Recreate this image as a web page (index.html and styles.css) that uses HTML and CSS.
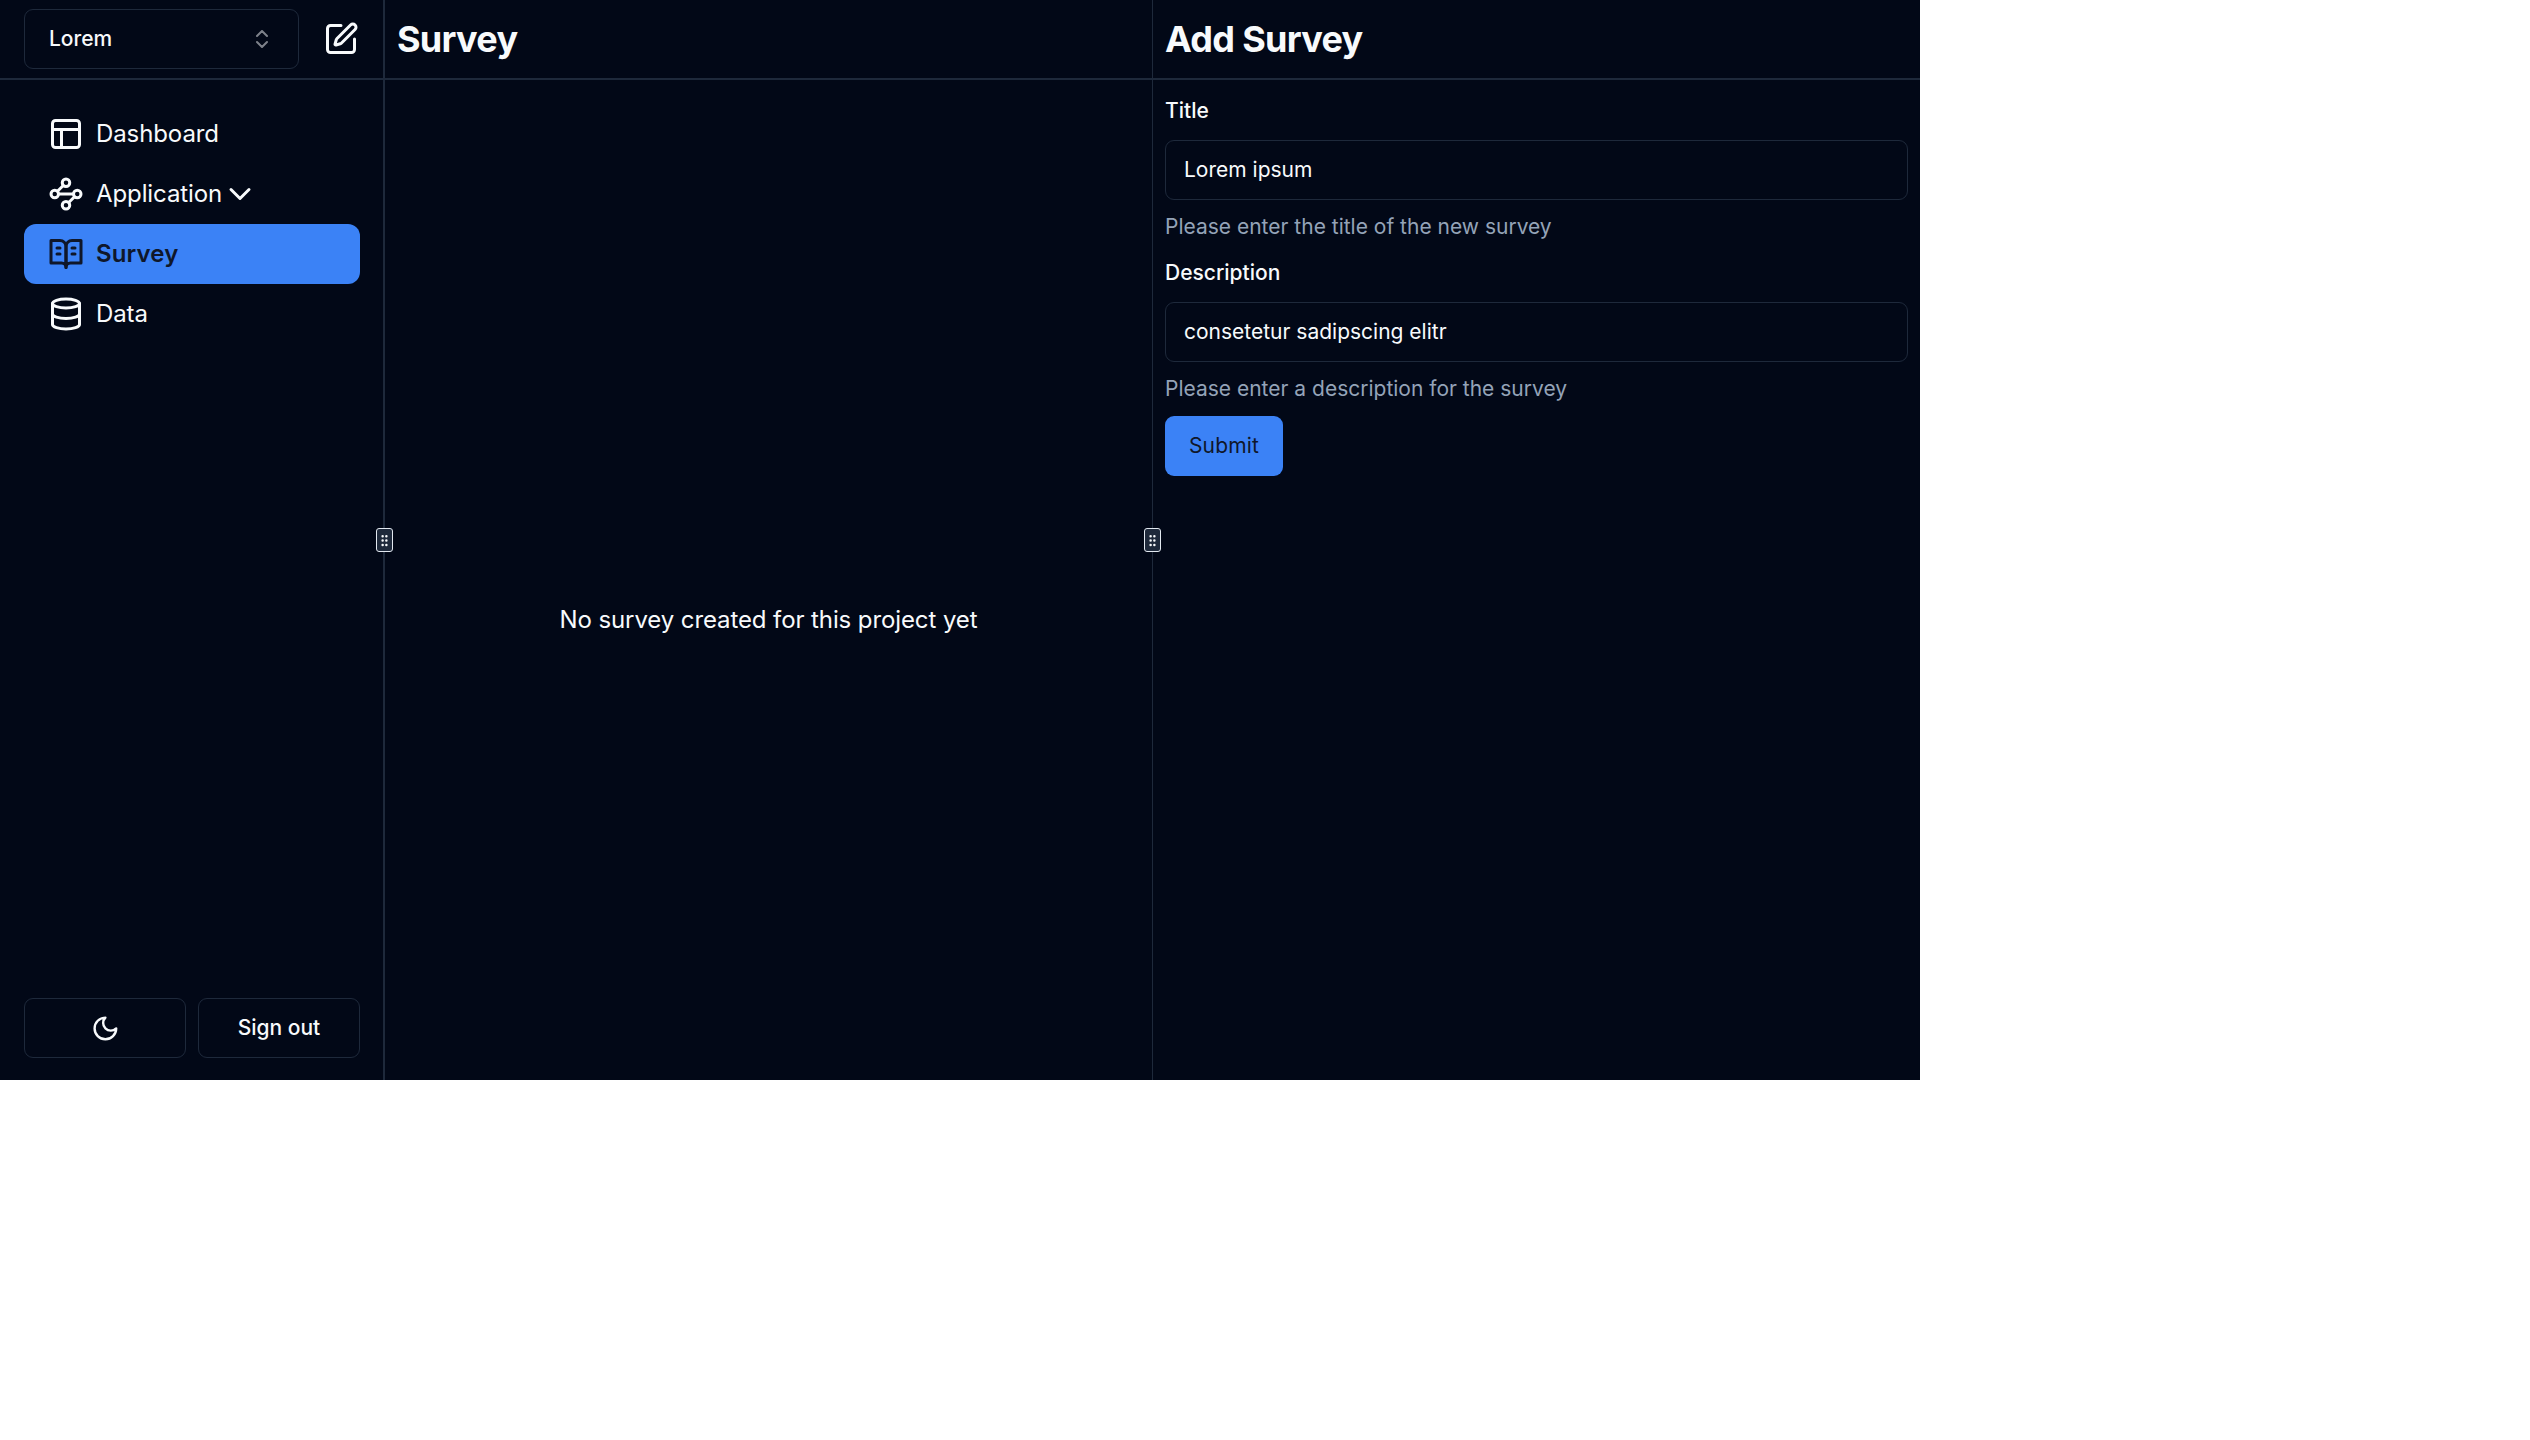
FILE: index.html
```html
<!DOCTYPE html>
<html lang="en">
<head>
<meta charset="utf-8">
<title>Survey</title>
<link rel="stylesheet" href="styles.css">
</head>
<body>
<div class="app">
  <aside class="sidebar">
    <div class="panel-header switcher">
      <button class="select" type="button">
        <span>Lorem</span>
        <svg class="icon select-icon" viewBox="0 0 24 24"><path d="m7 15 5 5 5-5"/><path d="m7 9 5-5 5 5"/></svg>
      </button>
      <svg class="icon icon-lg edit-icon" viewBox="0 0 24 24"><path d="M12 3H5a2 2 0 0 0-2 2v14a2 2 0 0 0 2 2h14a2 2 0 0 0 2-2v-7"/><path d="M18.375 2.625a1 1 0 0 1 3 3l-9.013 9.014a2 2 0 0 1-.853.505l-2.873.84a.5.5 0 0 1-.62-.62l.84-2.873a2 2 0 0 1 .506-.852z"/></svg>
    </div>
    <nav class="nav">
      <a class="nav-item">
        <svg class="icon icon-lg" viewBox="0 0 24 24"><rect x="3" y="3" width="18" height="18" rx="2"/><path d="M3 9h18"/><path d="M9 21V9"/></svg>
        <span class="nav-label">Dashboard</span>
      </a>
      <a class="nav-item">
        <svg class="icon icon-lg" viewBox="0 0 24 24"><circle cx="12" cy="4.5" r="2.5"/><path d="m10.2 6.3-3.9 3.9"/><circle cx="4.5" cy="12" r="2.5"/><path d="M7 12h10"/><circle cx="19.5" cy="12" r="2.5"/><path d="m13.8 17.7 3.9-3.9"/><circle cx="12" cy="19.5" r="2.5"/></svg>
        <span class="nav-label">Application</span>
        <svg class="icon icon-lg" viewBox="0 0 24 24"><path d="m6 9 6 6 6-6"/></svg>
      </a>
      <a class="nav-item nav-item-active">
        <svg class="icon icon-lg" viewBox="0 0 24 24"><path d="M2 3h6a4 4 0 0 1 4 4v14a3 3 0 0 0-3-3H2z"/><path d="M22 3h-6a4 4 0 0 0-4 4v14a3 3 0 0 1 3-3h7z"/><path d="M6 8h2"/><path d="M6 12h2"/><path d="M16 8h2"/><path d="M16 12h2"/></svg>
        <span class="nav-label">Survey</span>
      </a>
      <a class="nav-item">
        <svg class="icon icon-lg" viewBox="0 0 24 24"><ellipse cx="12" cy="5" rx="9" ry="3"/><path d="M3 5v14a9 3 0 0 0 18 0V5"/><path d="M3 12a9 3 0 0 0 18 0"/></svg>
        <span class="nav-label">Data</span>
      </a>
    </nav>
    <div class="sidebar-footer">
      <button class="button-outline" type="button" aria-label="Theme">
        <svg class="icon theme-icon" viewBox="0 0 24 24"><path d="M12 3a6 6 0 0 0 9 9 9 9 0 1 1-9-9Z"/></svg>
      </button>
      <button class="button-outline" type="button">Sign out</button>
    </div>
  </aside>
  <div class="divider divider-thick">
    <div class="handle">
      <svg class="icon handle-icon" viewBox="0 0 24 24"><circle cx="9" cy="5" r="1"/><circle cx="9" cy="12" r="1"/><circle cx="9" cy="19" r="1"/><circle cx="15" cy="5" r="1"/><circle cx="15" cy="12" r="1"/><circle cx="15" cy="19" r="1"/></svg>
    </div>
  </div>
  <main class="panel survey-panel">
    <header class="panel-header"><h1 class="title">Survey</h1></header>
    <div class="empty">No survey created for this project yet</div>
  </main>
  <div class="divider">
    <div class="handle">
      <svg class="icon handle-icon" viewBox="0 0 24 24"><circle cx="9" cy="5" r="1"/><circle cx="9" cy="12" r="1"/><circle cx="9" cy="19" r="1"/><circle cx="15" cy="5" r="1"/><circle cx="15" cy="12" r="1"/><circle cx="15" cy="19" r="1"/></svg>
    </div>
  </div>
  <section class="panel add-panel">
    <header class="panel-header"><h1 class="title">Add Survey</h1></header>
    <form class="form">
      <div class="field">
        <label class="label" for="title">Title</label>
        <input class="input" id="title" type="text" value="Lorem ipsum">
        <p class="hint">Please enter the title of the new survey</p>
      </div>
      <div class="field">
        <label class="label" for="description">Description</label>
        <input class="input" id="description" type="text" value="consetetur sadipscing elitr">
        <p class="hint">Please enter a description for the survey</p>
      </div>
      <button class="submit" type="button">Submit</button>
    </form>
  </section>
</div>
</body>
</html>
```
FILE: styles.css
```css
:root {
  --background: #020817;
  --foreground: #f8fafc;
  --border: #1e293b;
  --muted: #94a3b8;
  --primary: #3b82f6;
  --primary-foreground: #0f172a;
}

* {
  box-sizing: border-box;
}

body {
  margin: 0;
  background: #fff;
  font-family: Inter, "Liberation Sans", sans-serif;
  font-size: 24px;
  line-height: 36px;
}

h1,
p {
  margin: 0;
}

button,
input {
  font: inherit;
  color: inherit;
  background: transparent;
}

.app {
  display: flex;
  width: 1920px;
  height: 1080px;
  background: var(--background);
  color: var(--foreground);
}

.icon {
  display: block;
  flex: none;
  width: 24px;
  height: 24px;
  fill: none;
  stroke: currentColor;
  stroke-width: 2;
  stroke-linecap: round;
  stroke-linejoin: round;
}

.icon-lg {
  width: 36px;
  height: 36px;
}

.sidebar {
  display: flex;
  flex-direction: column;
  width: 383px;
}

.panel {
  display: flex;
  flex-direction: column;
}

.survey-panel {
  width: 767px;
}

.add-panel {
  flex: 1;
}

.panel-header {
  display: flex;
  flex: none;
  align-items: center;
  height: 80px;
  padding: 0 12px;
  border-bottom: 2px solid var(--border);
}

.title {
  font-size: 36px;
  font-weight: 700;
  line-height: 48px;
  letter-spacing: -0.7px;
}

.switcher {
  gap: 24px;
  padding: 0 24px;
}

.select {
  display: flex;
  align-items: center;
  justify-content: space-between;
  width: 275px;
  height: 60px;
  padding: 0 24px;
  border: 1px solid var(--border);
  border-radius: 9px;
  font-size: 21px;
  font-weight: 500;
}

.select-icon {
  opacity: 0.5;
}

.nav {
  display: flex;
  flex: 1;
  flex-direction: column;
  padding: 24px 23px 0 24px;
}

.nav-item {
  display: flex;
  align-items: center;
  height: 60px;
  padding: 0 24px;
  border-radius: 12px;
  letter-spacing: -0.1px;
}

.nav-item-active {
  background: var(--primary);
  color: var(--primary-foreground);
  font-weight: 600;
  letter-spacing: 0.12px;
}

.nav-label {
  margin-left: 12px;
}

.sidebar-footer {
  display: grid;
  grid-template-columns: 1fr 1fr;
  gap: 12px;
  padding: 0 23px 22px 24px;
}

.button-outline {
  display: flex;
  align-items: center;
  justify-content: center;
  height: 60px;
  padding: 0;
  border: 1px solid var(--border);
  border-radius: 9px;
  font-size: 21px;
  font-weight: 500;
}

.theme-icon {
  width: 28.8px;
  height: 28.8px;
}

.divider {
  position: relative;
  flex: none;
  width: 1px;
  background: var(--border);
}

.divider-thick {
  width: 2px;
}

.handle {
  position: absolute;
  top: 528px;
  left: -8px;
  display: flex;
  align-items: center;
  justify-content: center;
  width: 17px;
  height: 24px;
  border: 1px solid #e2e8f0;
  border-radius: 3px;
  background: var(--border);
}

.divider-thick .handle {
  left: -7px;
}

.handle-icon {
  width: 15px;
  height: 15px;
}

.empty {
  display: flex;
  flex: 1;
  align-items: center;
  justify-content: center;
  padding-top: 79px;
  letter-spacing: -0.1px;
}

.form {
  display: flex;
  flex-direction: column;
  gap: 12px;
  align-items: flex-start;
  padding: 12px;
}

.field {
  display: flex;
  flex-direction: column;
  gap: 12px;
  width: 100%;
}

.label {
  height: 36px;
  font-size: 21px;
  font-weight: 500;
  line-height: 38px;
}

.input {
  width: 100%;
  height: 60px;
  padding: 0 18px 2px;
  border: 1px solid var(--border);
  border-radius: 9px;
  font-size: 21px;
}

.hint {
  color: var(--muted);
  font-size: 21px;
  line-height: 30px;
}

.submit {
  height: 60px;
  padding: 0 24px;
  border: 0;
  border-radius: 9px;
  background: var(--primary);
  color: var(--primary-foreground);
  font-size: 21px;
  letter-spacing: 0.15px;
}
```
